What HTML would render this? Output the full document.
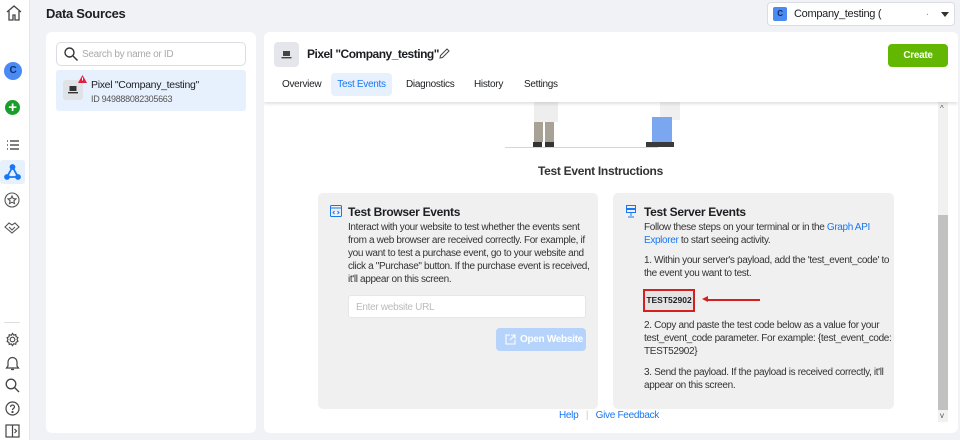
<!DOCTYPE html>
<html><head><meta charset="utf-8"><style>
*{box-sizing:border-box;margin:0;padding:0}
body{width:960px;height:440px;overflow:hidden;background:#f0f2f5;font-family:"Liberation Sans",Arial,sans-serif;color:#1c1e21;position:relative;font-size:12px;letter-spacing:-0.3px}
.abs{position:absolute;white-space:nowrap}
.side{left:0;top:0;width:30px;height:440px;background:#fff;border-right:1px solid #e4e6eb}
.card{background:#fff;border-radius:6px}
.blue{color:#1877f2}
p{line-height:13px;font-size:10px;color:#333;letter-spacing:-0.35px}
</style></head><body>
<div class="abs side">
 <svg class="abs" style="left:5px;top:4px" width="18" height="18" viewBox="0 0 18 18" fill="none" stroke="#444" stroke-width="1.3"><path d="M2 8L9 2l7 6M4 7v9h4v-5h2v5h4V7"/></svg>
 <div class="abs" style="left:4px;top:62px;width:18px;height:18px;border-radius:50%;background:#4a8af4;color:#103070;font-size:10px;font-weight:bold;text-align:center;line-height:18px">C</div>
 <div class="abs" style="left:5px;top:100px;width:15px;height:15px;border-radius:50%;background:#1a9e2a;color:#fff;font-size:15px;font-weight:bold;text-align:center;line-height:15px">+</div>
 <svg class="abs" style="left:6px;top:139px" width="14" height="12" viewBox="0 0 14 12" stroke="#333" stroke-width="1.3"><path d="M1 2h1M4 2h9M1 6h1M4 6h9M1 10h1M4 10h9"/></svg>
 <div class="abs" style="left:0;top:160px;width:25px;height:24px;background:#e7f0fd;border-radius:3px"></div>
 <svg class="abs" style="left:4px;top:164px" width="17" height="16" viewBox="0 0 17 16" fill="#1877f2" stroke="#1877f2" stroke-width="1.8"><path d="M8.5 3L3 13h11z" fill="none"/><circle cx="8.5" cy="3" r="2"/><circle cx="3" cy="13" r="2"/><circle cx="14" cy="13" r="2"/></svg>
 <svg class="abs" style="left:4px;top:192px" width="16" height="16" viewBox="0 0 16 16" fill="none" stroke="#555" stroke-width="1.1"><circle cx="8" cy="8" r="7"/><path d="M8 4l1.2 2.6 2.8.3-2.1 1.9.6 2.8L8 10.2l-2.5 1.4.6-2.8L4 6.9l2.8-.3z"/></svg>
 <svg class="abs" style="left:4px;top:221px" width="16" height="14" viewBox="0 0 16 14" fill="none" stroke="#555" stroke-width="1.1"><path d="M1 6l4-4 3 2 3-2 4 4-7 6z M5 6l3 3 3-3"/></svg>
 <div class="abs" style="left:4px;top:322px;width:16px;height:1px;background:#ddd"></div>
 <svg class="abs" style="left:5px;top:332px" width="15" height="15" viewBox="0 0 16 16" fill="none" stroke="#444" stroke-width="1.2"><circle cx="8" cy="8" r="2.5"/><path d="M8 1.5l1.3 1.8 2.2-.6.3 2.2 2 1-1 2 1 2-2 1-.3 2.2-2.2-.6L8 14.5l-1.3-1.8-2.2.6-.3-2.2-2-1 1-2-1-2 2-1 .3-2.2 2.2.6z"/></svg>
 <svg class="abs" style="left:5px;top:355px" width="15" height="16" viewBox="0 0 15 16" fill="none" stroke="#444" stroke-width="1.2"><path d="M3 11V7a4.5 4.5 0 019 0v4l1.5 2h-12z M6 14.5h3"/></svg>
 <svg class="abs" style="left:5px;top:378px" width="15" height="15" viewBox="0 0 15 15" fill="none" stroke="#444" stroke-width="1.3"><circle cx="6" cy="6" r="4.8"/><path d="M9.5 9.5L14 14"/></svg>
 <svg class="abs" style="left:5px;top:401px" width="15" height="15" viewBox="0 0 15 15" fill="none" stroke="#444" stroke-width="1.2"><circle cx="7.5" cy="7.5" r="6.5"/><path d="M5.5 6a2 2 0 114 0c0 1.3-2 1.5-2 3"/><circle cx="7.5" cy="11" r=".5" fill="#444"/></svg>
 <svg class="abs" style="left:5px;top:424px" width="15" height="14" viewBox="0 0 15 14" fill="none" stroke="#444" stroke-width="1.2"><rect x="1" y="1" width="13" height="12"/><path d="M7.5 1v12M9.5 5l2 2-2 2"/></svg>
</div>
<div class="abs" style="left:46px;top:6px;font-size:13px;font-weight:bold;color:#1c1e21">Data Sources</div>
<div class="abs" style="left:767px;top:2px;width:188px;height:24px;background:#fff;border:1px solid #dadde1;border-radius:4px">
 <div class="abs" style="left:5px;top:4px;width:14px;height:14px;background:#4a8af4;border-radius:2px;color:#102a60;font-size:8px;font-weight:bold;text-align:center;line-height:14px">C</div>
 <div class="abs" style="left:26px;top:5px;font-size:11px">Company_testing (</div>
 <div class="abs" style="left:158px;top:4px;font-size:10px;color:#888">.</div>
 <div class="abs" style="left:173px;top:9px;width:0;height:0;border-left:4px solid transparent;border-right:4px solid transparent;border-top:5px solid #333"></div>
</div>
<div class="abs card" style="left:46px;top:32px;width:210px;height:401px">
 <div class="abs" style="left:10px;top:10px;width:190px;height:24px;border:1px solid #dadde1;border-radius:5px">
  <svg class="abs" style="left:7px;top:4px" width="14" height="14" viewBox="0 0 14 14" fill="none" stroke="#333" stroke-width="1.4"><circle cx="5.5" cy="5.5" r="4.5"/><path d="M9 9l4.5 4.5"/></svg>
  <div class="abs" style="left:25px;top:6px;font-size:10px;color:#aaa">Search by name or ID</div>
 </div>
 <div class="abs" style="left:10px;top:38px;width:190px;height:41px;background:#e7f0fd;border-radius:3px">
  <div class="abs" style="left:7px;top:10px;width:20px;height:20px;background:#dfe3e8;border-radius:3px"></div>
  <svg class="abs" style="left:12px;top:15px" width="10" height="9" viewBox="0 0 10 9"><rect x="1.5" y="1" width="7" height="5" fill="#333"/><rect x="0" y="7" width="10" height="1.4" fill="#333"/></svg>
  <svg class="abs" style="left:22px;top:5px" width="9" height="8" viewBox="0 0 9 8"><path d="M4.5 0L9 8H0z" fill="#e41e3f"/><rect x="4" y="2.5" width="1" height="3" fill="#fff"/></svg>
  <div class="abs" style="left:35px;top:9px;font-size:10.5px">Pixel "Company_testing"</div>
  <div class="abs" style="left:35px;top:24px;font-size:9px;color:#555">ID 949888082305663</div>
 </div>
</div>
<div class="abs card" style="left:264px;top:32px;width:694px;height:401px;overflow:hidden">
 <div class="abs" style="left:0;top:0;width:694px;height:70px;background:#fff;box-shadow:0 2px 3px rgba(0,0,0,.12);z-index:2">
  <div class="abs" style="left:10px;top:10px;width:25px;height:25px;background:#e4e6eb;border-radius:4px"></div>
  <svg class="abs" style="left:17px;top:18px" width="11" height="9" viewBox="0 0 10 9"><rect x="1.5" y="1" width="7" height="5" fill="#444"/><rect x="0" y="7" width="10" height="1.4" fill="#444"/></svg>
  <div class="abs" style="left:43px;top:15px;font-size:12px;font-weight:bold;letter-spacing:-0.5px">Pixel "Company_testing"</div>
  <svg class="abs" style="left:175px;top:16px" width="11" height="11" viewBox="0 0 11 11" fill="none" stroke="#444" stroke-width="1"><path d="M1 10l.5-2.5L8 1l2 2-6.5 6.5z"/></svg>
  <div class="abs" style="left:624px;top:12px;width:60px;height:23px;background:#62b800;border-radius:4px;color:#fff;font-size:10px;font-weight:bold;text-align:center;line-height:23px">Create</div>
  <div class="abs" style="left:18px;top:47px;font-size:10px">Overview</div>
  <div class="abs" style="left:67px;top:41px;width:61px;height:23px;background:#e7f0fd;border-radius:4px;color:#1877f2;font-size:10px;text-align:center;line-height:23px;letter-spacing:-0.3px">Test Events</div>
  <div class="abs" style="left:142px;top:47px;font-size:10px">Diagnostics</div>
  <div class="abs" style="left:210px;top:47px;font-size:10px">History</div>
  <div class="abs" style="left:260px;top:47px;font-size:10px">Settings</div>
 </div>
 <!-- illustration -->
 <div class="abs" style="left:270px;top:68px;width:24px;height:22px;background:#eee"></div>
 <div class="abs" style="left:270px;top:90px;width:9px;height:20px;background:#a8a196"></div>
 <div class="abs" style="left:281px;top:90px;width:9px;height:20px;background:#a8a196"></div>
 <div class="abs" style="left:269px;top:110px;width:9px;height:5px;background:#333"></div>
 <div class="abs" style="left:281px;top:110px;width:9px;height:5px;background:#333"></div>
 <div class="abs" style="left:396px;top:70px;width:20px;height:18px;background:#f0f0f0"></div>
 <div class="abs" style="left:388px;top:85px;width:20px;height:25px;background:#7ba7f0"></div>
 <div class="abs" style="left:382px;top:110px;width:28px;height:5px;background:#3a3a3a"></div>
 <div class="abs" style="left:241px;top:115px;width:153px;height:1px;background:#d8d4ce"></div>
 <div class="abs" style="left:0;top:132px;width:673px;text-align:center;font-size:12px;font-weight:bold;color:#333">Test Event Instructions</div>
 <!-- scrollbar -->
 <div class="abs" style="left:674px;top:70px;width:10px;height:320px;background:#f1f1f1"></div>
 <div class="abs" style="left:674px;top:183px;width:10px;height:195px;background:#c1c1c1"></div>
 <div class="abs" style="left:676px;top:72px;font-size:8px;color:#555">^</div>
 <div class="abs" style="left:676px;top:379px;font-size:8px;color:#555">v</div>
 <!-- browser -->
 <div class="abs" style="left:54px;top:161px;width:280px;height:216px;background:#f0f0f0;border-radius:5px">
  <svg class="abs" style="left:12px;top:12px" width="12" height="12" viewBox="0 0 12 12" fill="none" stroke="#1877f2" stroke-width="1"><rect x=".5" y=".5" width="11" height="11" rx="1"/><path d="M.5 3h11M4.5 6L3 7.5 4.5 9M7.5 6L9 7.5 7.5 9"/></svg>
  <div class="abs" style="left:30px;top:12px;font-size:12px;font-weight:bold">Test Browser Events</div>
  <p class="abs" style="left:30px;top:28px">Interact with your website to test whether the events sent<br>from a web browser are received correctly. For example, if<br>you want to test a purchase event, go to your website and<br>click a "Purchase" button. If the purchase event is received,<br>it'll appear on this screen.</p>
  <div class="abs" style="left:30px;top:102px;width:238px;height:23px;background:#fff;border-radius:3px;border:1px solid #e6e6e6;font-size:10px;color:#bbb;padding:6px 7px">Enter website URL</div>
  <div class="abs" style="left:178px;top:135px;width:90px;height:23px;background:#b5d3fb;border-radius:4px;color:#fff;font-size:10px;font-weight:bold;line-height:23px;padding-left:24px">Open Website</div>
  <svg class="abs" style="left:187px;top:141px" width="11" height="11" viewBox="0 0 11 11" fill="none" stroke="#fff" stroke-width="1.1"><path d="M5 1H1v9h9V6M6 1h4v4M10 1L5 6"/></svg>
 </div>
 <!-- server -->
 <div class="abs" style="left:349px;top:161px;width:281px;height:216px;background:#f0f0f0;border-radius:5px">
  <svg class="abs" style="left:13px;top:12px" width="10" height="13" viewBox="0 0 10 13" fill="none" stroke="#1877f2" stroke-width="1"><rect x=".5" y=".5" width="9" height="3"/><rect x=".5" y="4.5" width="9" height="3"/><path d="M5 8v3M2 12h6"/></svg>
  <div class="abs" style="left:31px;top:12px;font-size:12px;font-weight:bold">Test Server Events</div>
  <p class="abs" style="left:31px;top:28px">Follow these steps on your terminal or in the <span class="blue">Graph API</span><br><span class="blue">Explorer</span> to start seeing activity.</p>
  <p class="abs" style="left:31px;top:61px">1. Within your server's payload, add the 'test_event_code' to<br>the event you want to test.</p>
  <div class="abs" style="left:30px;top:96px;width:52px;height:23px;border:2px solid #d42020;background:#e4e4e4;font-size:8.5px;font-weight:bold;text-align:center;line-height:19px;letter-spacing:0">TEST52902</div>
  <div class="abs" style="left:89px;top:103px;width:0;height:0;border-top:3.5px solid transparent;border-bottom:3.5px solid transparent;border-right:6px solid #d42020"></div>
  <div class="abs" style="left:94px;top:106px;width:53px;height:2px;background:#d42020"></div>
  <p class="abs" style="left:31px;top:126px">2. Copy and paste the test code below as a value for your<br>test_event_code parameter. For example: {test_event_code:<br>TEST52902}</p>
  <p class="abs" style="left:31px;top:173px">3. Send the payload. If the payload is received correctly, it'll<br>appear on this screen.</p>
 </div>
 <div class="abs" style="left:295px;top:378px;font-size:10px"><span class="blue">Help</span> <span style="color:#ccc;margin:0 5px">|</span> <span class="blue">Give Feedback</span></div>
</div>
</body></html>
